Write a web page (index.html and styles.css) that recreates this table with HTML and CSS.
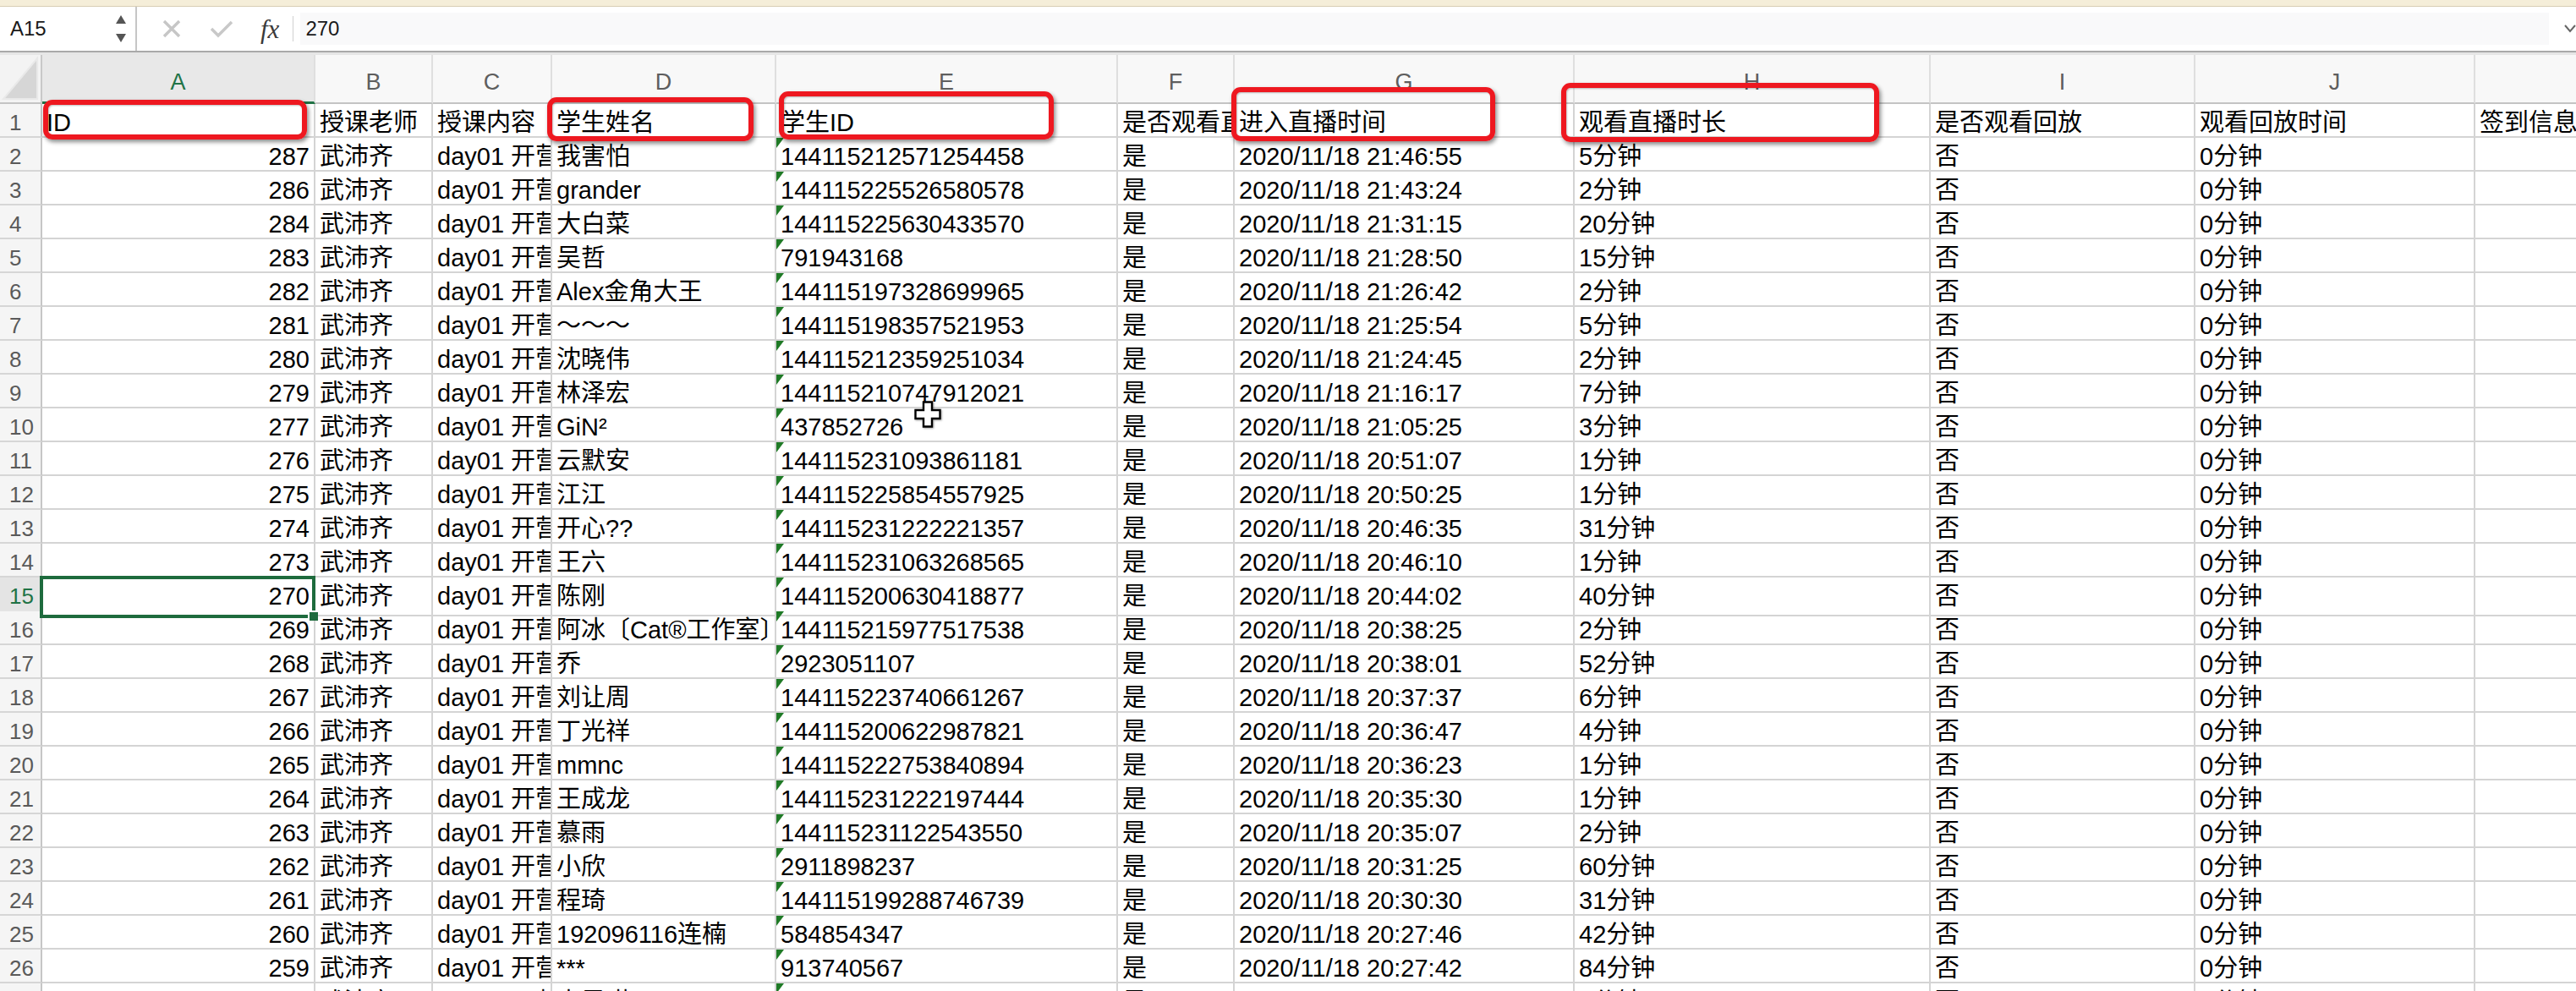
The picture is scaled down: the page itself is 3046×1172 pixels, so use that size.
FILE: index.html
```html
<!DOCTYPE html>
<html lang="zh-CN">
<head>
<meta charset="utf-8">
<title>Sheet</title>
<link rel="stylesheet" href="styles.css">
</head>
<body>
<div class="app">
  <div class="topstrip"></div>
  <div class="fbar">
    <div class="namebox">
      <span class="nb-text">A15</span>
      <svg class="spin" width="14" height="34" viewBox="0 0 14 34"><polygon points="7,1 13,11 1,11" fill="#555"/><polygon points="1,23 13,23 7,33" fill="#555"/></svg>
    </div>
    <svg class="ic-x" width="22" height="22" viewBox="0 0 22 22"><path d="M2 2 L20 20 M20 2 L2 20" stroke="#c6c6c6" stroke-width="3.4" fill="none"/></svg>
    <svg class="ic-ok" width="28" height="22" viewBox="0 0 28 22"><path d="M2 11 L10 19 L26 3" stroke="#c8c8c8" stroke-width="3.4" fill="none"/></svg>
    <span class="ic-fx">fx</span>
    <span class="fsep"></span>
    <div class="finput">270</div>
    <svg class="chev" width="14" height="10" viewBox="0 0 14 10"><path d="M1 1 L7 8 L13 1" stroke="#666" stroke-width="2" fill="none"/></svg>
  </div>
  <div class="gap"></div>

  <div class="sheet">
    <div class="hrow">
      <div class="corner"><svg width="48" height="56" viewBox="0 0 48 56"><polygon points="44,4 44,52 4,52" fill="#d6d6d6" stroke="#e9e9e9" stroke-width="2"/></svg></div>
      <div class="h hsel">A</div><div class="h">B</div><div class="h">C</div><div class="h">D</div><div class="h">E</div><div class="h">F</div><div class="h">G</div><div class="h">H</div><div class="h">I</div><div class="h">J</div><div class="h">K</div>
    </div>

    <div class="row"><div class="rh">1</div><div class="c">ID</div><div class="c">授课老师</div><div class="c">授课内容</div><div class="c">学生姓名</div><div class="c">学生ID</div><div class="c">是否观看直播</div><div class="c">进入直播时间</div><div class="c">观看直播时长</div><div class="c">是否观看回放</div><div class="c">观看回放时间</div><div class="c">签到信息</div></div>
    <div class="row"><div class="rh">2</div><div class="c n">287</div><div class="c">武沛齐</div><div class="c">day01 开营仪式</div><div class="c">我害怕</div><div class="c t">144115212571254458</div><div class="c">是</div><div class="c">2020/11/18 21:46:55</div><div class="c">5分钟</div><div class="c">否</div><div class="c">0分钟</div><div class="c"></div></div>
    <div class="row"><div class="rh">3</div><div class="c n">286</div><div class="c">武沛齐</div><div class="c">day01 开营仪式</div><div class="c">grander</div><div class="c t">144115225526580578</div><div class="c">是</div><div class="c">2020/11/18 21:43:24</div><div class="c">2分钟</div><div class="c">否</div><div class="c">0分钟</div><div class="c"></div></div>
    <div class="row"><div class="rh">4</div><div class="c n">284</div><div class="c">武沛齐</div><div class="c">day01 开营仪式</div><div class="c">大白菜</div><div class="c t">144115225630433570</div><div class="c">是</div><div class="c">2020/11/18 21:31:15</div><div class="c">20分钟</div><div class="c">否</div><div class="c">0分钟</div><div class="c"></div></div>
    <div class="row"><div class="rh">5</div><div class="c n">283</div><div class="c">武沛齐</div><div class="c">day01 开营仪式</div><div class="c">吴哲</div><div class="c t">791943168</div><div class="c">是</div><div class="c">2020/11/18 21:28:50</div><div class="c">15分钟</div><div class="c">否</div><div class="c">0分钟</div><div class="c"></div></div>
    <div class="row"><div class="rh">6</div><div class="c n">282</div><div class="c">武沛齐</div><div class="c">day01 开营仪式</div><div class="c">Alex金角大王</div><div class="c t">144115197328699965</div><div class="c">是</div><div class="c">2020/11/18 21:26:42</div><div class="c">2分钟</div><div class="c">否</div><div class="c">0分钟</div><div class="c"></div></div>
    <div class="row"><div class="rh">7</div><div class="c n">281</div><div class="c">武沛齐</div><div class="c">day01 开营仪式</div><div class="c">～～～</div><div class="c t">144115198357521953</div><div class="c">是</div><div class="c">2020/11/18 21:25:54</div><div class="c">5分钟</div><div class="c">否</div><div class="c">0分钟</div><div class="c"></div></div>
    <div class="row"><div class="rh">8</div><div class="c n">280</div><div class="c">武沛齐</div><div class="c">day01 开营仪式</div><div class="c">沈晓伟</div><div class="c t">144115212359251034</div><div class="c">是</div><div class="c">2020/11/18 21:24:45</div><div class="c">2分钟</div><div class="c">否</div><div class="c">0分钟</div><div class="c"></div></div>
    <div class="row"><div class="rh">9</div><div class="c n">279</div><div class="c">武沛齐</div><div class="c">day01 开营仪式</div><div class="c">林泽宏</div><div class="c t">144115210747912021</div><div class="c">是</div><div class="c">2020/11/18 21:16:17</div><div class="c">7分钟</div><div class="c">否</div><div class="c">0分钟</div><div class="c"></div></div>
    <div class="row"><div class="rh">10</div><div class="c n">277</div><div class="c">武沛齐</div><div class="c">day01 开营仪式</div><div class="c">GiN²</div><div class="c t">437852726</div><div class="c">是</div><div class="c">2020/11/18 21:05:25</div><div class="c">3分钟</div><div class="c">否</div><div class="c">0分钟</div><div class="c"></div></div>
    <div class="row"><div class="rh">11</div><div class="c n">276</div><div class="c">武沛齐</div><div class="c">day01 开营仪式</div><div class="c">云默安</div><div class="c t">144115231093861181</div><div class="c">是</div><div class="c">2020/11/18 20:51:07</div><div class="c">1分钟</div><div class="c">否</div><div class="c">0分钟</div><div class="c"></div></div>
    <div class="row"><div class="rh">12</div><div class="c n">275</div><div class="c">武沛齐</div><div class="c">day01 开营仪式</div><div class="c">江江</div><div class="c t">144115225854557925</div><div class="c">是</div><div class="c">2020/11/18 20:50:25</div><div class="c">1分钟</div><div class="c">否</div><div class="c">0分钟</div><div class="c"></div></div>
    <div class="row"><div class="rh">13</div><div class="c n">274</div><div class="c">武沛齐</div><div class="c">day01 开营仪式</div><div class="c">开心??</div><div class="c t">144115231222221357</div><div class="c">是</div><div class="c">2020/11/18 20:46:35</div><div class="c">31分钟</div><div class="c">否</div><div class="c">0分钟</div><div class="c"></div></div>
    <div class="row"><div class="rh">14</div><div class="c n">273</div><div class="c">武沛齐</div><div class="c">day01 开营仪式</div><div class="c">王六</div><div class="c t">144115231063268565</div><div class="c">是</div><div class="c">2020/11/18 20:46:10</div><div class="c">1分钟</div><div class="c">否</div><div class="c">0分钟</div><div class="c"></div></div>
    <div class="row"><div class="rh rsel">15</div><div class="c n cur">270</div><div class="c">武沛齐</div><div class="c">day01 开营仪式</div><div class="c">陈刚</div><div class="c t">144115200630418877</div><div class="c">是</div><div class="c">2020/11/18 20:44:02</div><div class="c">40分钟</div><div class="c">否</div><div class="c">0分钟</div><div class="c"></div></div>
    <div class="row"><div class="rh">16</div><div class="c n">269</div><div class="c">武沛齐</div><div class="c">day01 开营仪式</div><div class="c">阿冰〔Cat®工作室〕</div><div class="c t">144115215977517538</div><div class="c">是</div><div class="c">2020/11/18 20:38:25</div><div class="c">2分钟</div><div class="c">否</div><div class="c">0分钟</div><div class="c"></div></div>
    <div class="row"><div class="rh">17</div><div class="c n">268</div><div class="c">武沛齐</div><div class="c">day01 开营仪式</div><div class="c">乔</div><div class="c t">2923051107</div><div class="c">是</div><div class="c">2020/11/18 20:38:01</div><div class="c">52分钟</div><div class="c">否</div><div class="c">0分钟</div><div class="c"></div></div>
    <div class="row"><div class="rh">18</div><div class="c n">267</div><div class="c">武沛齐</div><div class="c">day01 开营仪式</div><div class="c">刘让周</div><div class="c t">144115223740661267</div><div class="c">是</div><div class="c">2020/11/18 20:37:37</div><div class="c">6分钟</div><div class="c">否</div><div class="c">0分钟</div><div class="c"></div></div>
    <div class="row"><div class="rh">19</div><div class="c n">266</div><div class="c">武沛齐</div><div class="c">day01 开营仪式</div><div class="c">丁光祥</div><div class="c t">144115200622987821</div><div class="c">是</div><div class="c">2020/11/18 20:36:47</div><div class="c">4分钟</div><div class="c">否</div><div class="c">0分钟</div><div class="c"></div></div>
    <div class="row"><div class="rh">20</div><div class="c n">265</div><div class="c">武沛齐</div><div class="c">day01 开营仪式</div><div class="c">mmnc</div><div class="c t">144115222753840894</div><div class="c">是</div><div class="c">2020/11/18 20:36:23</div><div class="c">1分钟</div><div class="c">否</div><div class="c">0分钟</div><div class="c"></div></div>
    <div class="row"><div class="rh">21</div><div class="c n">264</div><div class="c">武沛齐</div><div class="c">day01 开营仪式</div><div class="c">王成龙</div><div class="c t">144115231222197444</div><div class="c">是</div><div class="c">2020/11/18 20:35:30</div><div class="c">1分钟</div><div class="c">否</div><div class="c">0分钟</div><div class="c"></div></div>
    <div class="row"><div class="rh">22</div><div class="c n">263</div><div class="c">武沛齐</div><div class="c">day01 开营仪式</div><div class="c">慕雨</div><div class="c t">144115231122543550</div><div class="c">是</div><div class="c">2020/11/18 20:35:07</div><div class="c">2分钟</div><div class="c">否</div><div class="c">0分钟</div><div class="c"></div></div>
    <div class="row"><div class="rh">23</div><div class="c n">262</div><div class="c">武沛齐</div><div class="c">day01 开营仪式</div><div class="c">小欣</div><div class="c t">2911898237</div><div class="c">是</div><div class="c">2020/11/18 20:31:25</div><div class="c">60分钟</div><div class="c">否</div><div class="c">0分钟</div><div class="c"></div></div>
    <div class="row"><div class="rh">24</div><div class="c n">261</div><div class="c">武沛齐</div><div class="c">day01 开营仪式</div><div class="c">程琦</div><div class="c t">144115199288746739</div><div class="c">是</div><div class="c">2020/11/18 20:30:30</div><div class="c">31分钟</div><div class="c">否</div><div class="c">0分钟</div><div class="c"></div></div>
    <div class="row"><div class="rh">25</div><div class="c n">260</div><div class="c">武沛齐</div><div class="c">day01 开营仪式</div><div class="c">192096116连楠</div><div class="c t">584854347</div><div class="c">是</div><div class="c">2020/11/18 20:27:46</div><div class="c">42分钟</div><div class="c">否</div><div class="c">0分钟</div><div class="c"></div></div>
    <div class="row"><div class="rh">26</div><div class="c n">259</div><div class="c">武沛齐</div><div class="c">day01 开营仪式</div><div class="c">***</div><div class="c t">913740567</div><div class="c">是</div><div class="c">2020/11/18 20:27:42</div><div class="c">84分钟</div><div class="c">否</div><div class="c">0分钟</div><div class="c"></div></div>
    <div class="row"><div class="rh">27</div><div class="c n">258</div><div class="c">武沛齐</div><div class="c">day01 开营仪式</div><div class="c">李思琪</div><div class="c t">144115231170842611</div><div class="c">是</div><div class="c">2020/11/18 20:27:30</div><div class="c">1分钟</div><div class="c">否</div><div class="c">0分钟</div><div class="c"></div></div>
  </div>

  <div class="anno an-a"></div>
  <div class="anno an-d"></div>
  <div class="anno an-e"></div>
  <div class="anno an-g"></div>
  <div class="anno an-h"></div>

  <svg class="cursor" width="32" height="32" viewBox="0 0 32 32"><polygon points="11,1.5 21,1.5 21,11 30.5,11 30.5,21 21,21 21,30.5 11,30.5 11,21 1.5,21 1.5,11 11,11" fill="#fff" stroke="#000" stroke-width="2.4"/></svg>
</div>
</body>
</html>
```

FILE: styles.css
```css
html, body {
  margin: 0;
  padding: 0;
}
body {
  width: 3046px;
  height: 1172px;
  overflow: hidden;
  background: #fff;
  font-family: "Liberation Sans", "Noto Sans CJK SC", sans-serif;
  color: #000;
}
.app {
  position: relative;
  width: 3046px;
  height: 1172px;
  overflow: hidden;
}
.topstrip {
  height: 7px;
  background: #f5eed9;
  border-bottom: 1px solid #d8ceb5;
}
.fbar {
  height: 52px;
  display: flex;
  align-items: center;
  background: #fff;
  border-bottom: 2px solid #a9a9a9;
}
.namebox {
  width: 162px;
  height: 100%;
  box-sizing: border-box;
  display: flex;
  align-items: center;
  padding: 0 10px 0 12px;
  border-right: 2px solid #c6c6c6;
  font-size: 24px;
  color: #1a1a1a;
}
.spin {
  margin-left: auto;
}
.ic-x {
  margin-left: 30px;
}
.ic-ok {
  margin-left: 34px;
}
.ic-fx {
  margin-left: 32px;
  font-family: "Liberation Serif", serif;
  font-style: italic;
  font-size: 31px;
  color: #3a3a3a;
  line-height: 1;
}
.fsep {
  width: 1px;
  height: 30px;
  margin-left: 16px;
  background: #d0d0d0;
}
.finput {
  flex: 1;
  height: 38px;
  margin-left: 8px;
  padding-left: 6px;
  background: #f9f9fa;
  display: flex;
  align-items: center;
  font-size: 24px;
  color: #1a1a1a;
}
.chev {
  margin-left: 18px;
  flex: none;
}
.gap {
  height: 3px;
  background: #e6e6e6;
}

.sheet {
  width: 3046px;
  overflow: hidden;
}
.hrow, .row {
  display: grid;
  grid-template-columns: 50px 323px 139px 141px 265px 404px 138px 402px 421px 313px 331px 300px;
  width: 3227px;
}
.hrow {
  height: 58px;
}
.row {
  height: 40px;
}
.corner {
  box-sizing: border-box;
  background: #f3f3f3;
  border-right: 2px solid #c8c8c8;
  border-bottom: 2px solid #c4c4c4;
}
.corner svg {
  display: block;
}
.h {
  box-sizing: border-box;
  background: #f8f8f8;
  border-right: 2px solid #dfdfdf;
  border-bottom: 2px solid #c4c4c4;
  text-align: center;
  font-size: 27px;
  line-height: 65px;
  color: #5e5e5e;
  overflow: hidden;
}
.h.hsel {
  background: #e8e8e8;
  color: #217346;
  border-bottom: 3px solid #217346;
}
.rh {
  box-sizing: border-box;
  background: #f5f5f5;
  border-right: 2px solid #c6c6c6;
  border-bottom: 2px solid #d6d6d6;
  padding-left: 11px;
  font-size: 26px;
  line-height: 44px;
  color: #5a5a5a;
  overflow: hidden;
}
.rh.rsel {
  background: #e4e4e4;
  color: #217346;
}
.c {
  box-sizing: border-box;
  border-right: 2px solid #d4d4d4;
  border-bottom: 2px solid #d4d4d4;
  padding: 0 5px;
  font-size: 29px;
  line-height: 44px;
  white-space: nowrap;
  overflow: hidden;
}
.c.n {
  text-align: right;
}
.c.t {
  position: relative;
}
.c.t::before {
  content: "";
  position: absolute;
  left: 0;
  top: 0;
  width: 0;
  height: 0;
  border-top: 12px solid #1f7a26;
  border-right: 9px solid transparent;
}
.c.cur {
  position: relative;
  overflow: visible;
}
.c.cur::after {
  content: "";
  position: absolute;
  left: -3px;
  top: -2px;
  right: -2px;
  bottom: -4px;
  border: 4px solid #1e6b3d;
  z-index: 3;
}
.c.cur::before {
  content: "";
  position: absolute;
  right: -5px;
  bottom: -7px;
  width: 10px;
  height: 10px;
  background: #1e6b3d;
  box-shadow: -1px -1px 0 1px #fff;
  z-index: 4;
}

.anno {
  position: absolute;
  box-sizing: border-box;
  border: 6px solid #ee1820;
  border-radius: 11px;
  box-shadow: 2px 3px 5px rgba(0, 0, 0, 0.45), inset 1px 1px 2px rgba(0, 0, 0, 0.25);
  z-index: 5;
}
.an-a { left: 51px; top: 118px; width: 312px; height: 47px; }
.an-d { left: 647px; top: 115px; width: 244px; height: 52px; }
.an-e { left: 921px; top: 108px; width: 325px; height: 57px; }
.an-g { left: 1456px; top: 103px; width: 312px; height: 64px; }
.an-h { left: 1846px; top: 98px; width: 376px; height: 70px; }

.cursor {
  position: absolute;
  left: 1081px;
  top: 474px;
  z-index: 6;
  filter: drop-shadow(1px 1px 1px rgba(0, 0, 0, 0.35));
}
```
